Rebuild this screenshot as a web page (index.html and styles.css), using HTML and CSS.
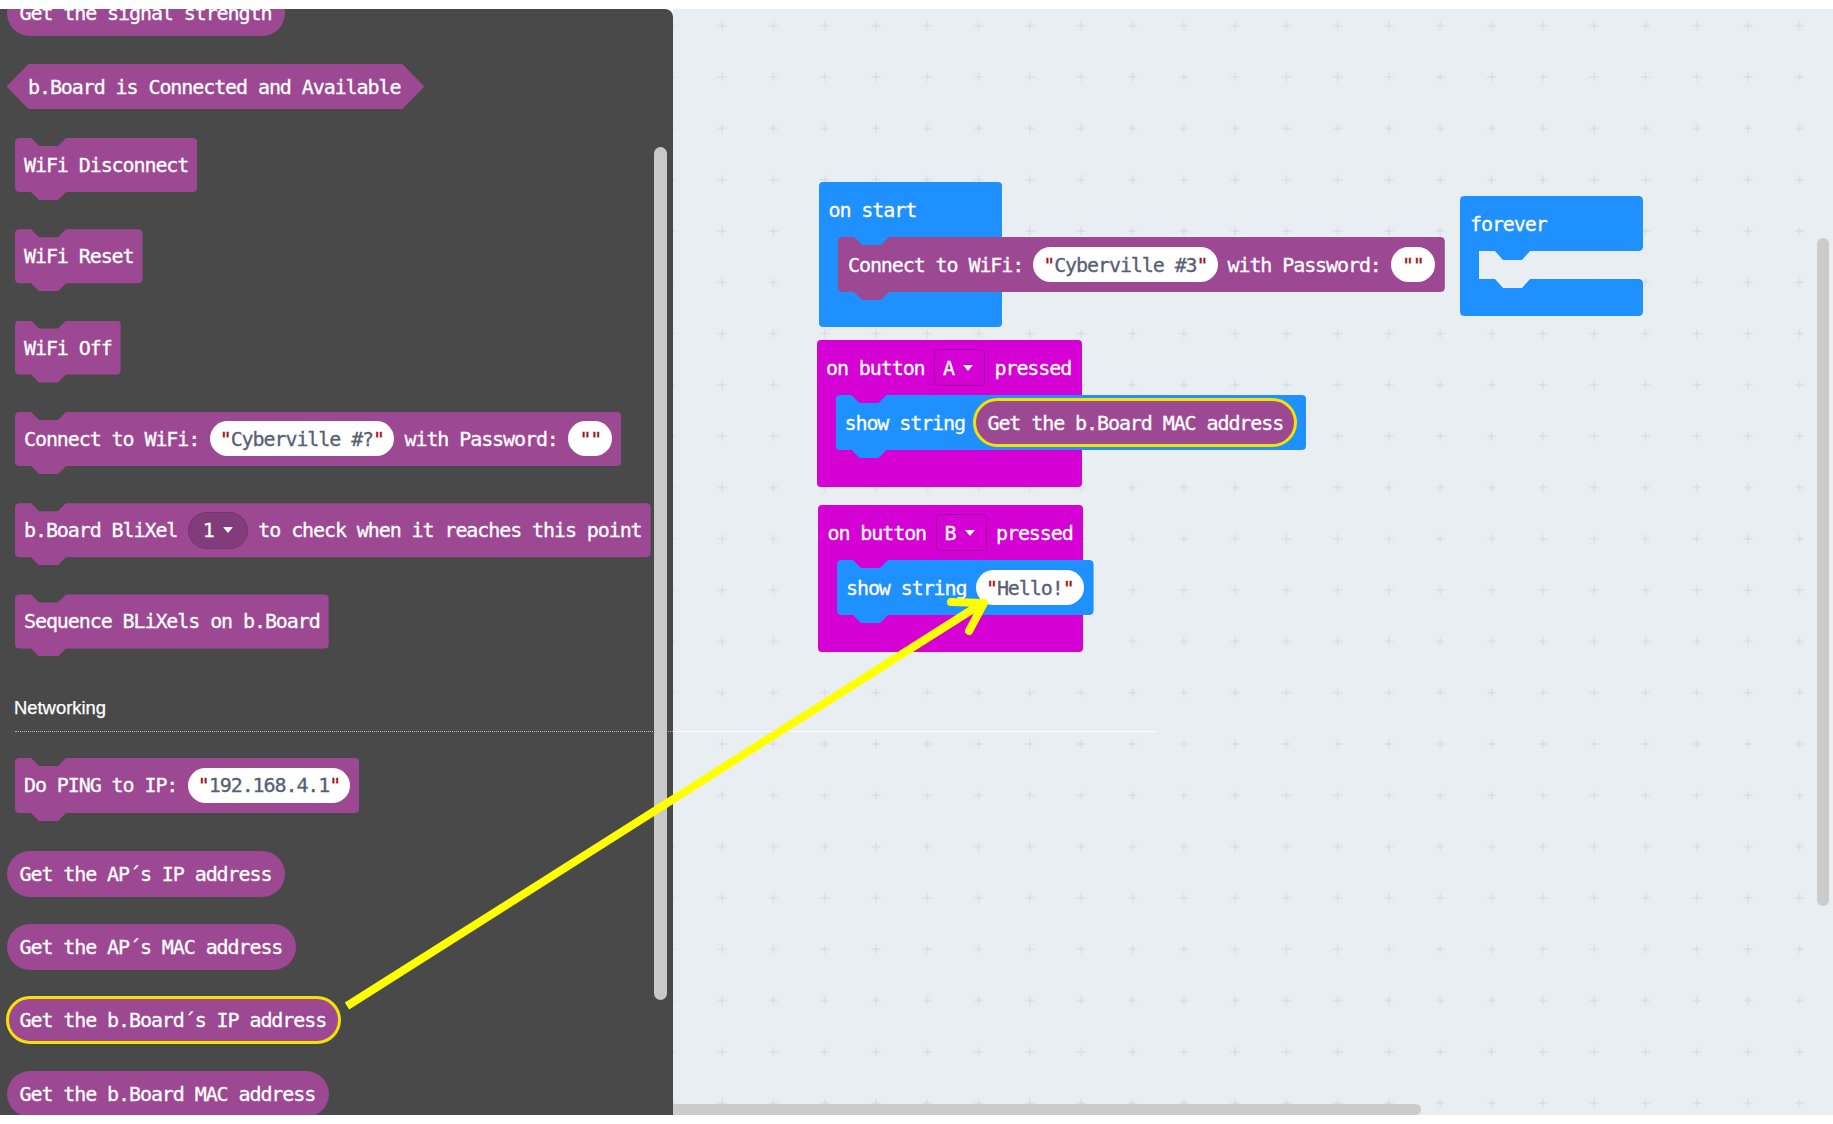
FILE: index.html
```html
<!DOCTYPE html>
<html lang="en">
<head>
<meta charset="utf-8">
<title>Blocks</title>
<link rel="stylesheet" href="styles.css">
</head>
<body>
<div class="workspace">
  <aside class="flyout">
    <div class="fly-list">
      <div class="blk reporter fl-signal">Get the signal strength</div>
      <div class="blk boolean fl-hex">b.Board is Connected and Available</div>
      <div class="blk stmt fl fl-first">WiFi Disconnect</div>
      <div class="blk stmt fl fl-next">WiFi Reset</div>
      <div class="blk stmt fl fl-next">WiFi Off</div>
      <div class="blk stmt fl fl-next">Connect to WiFi:<span class="str"><span class="q">"</span>Cyberville #?<span class="q">"</span></span>with Password:<span class="str"><span class="q">"</span><span class="q">"</span></span></div>
      <div class="blk stmt fl fl-next">b.Board BliXel<span class="dd">1<span class="caret"></span></span>to check when it reaches this point</div>
      <div class="blk stmt fl fl-next">Sequence BLiXels on b.Board</div>
      <div class="cat-label">Networking</div>
      <div class="cat-sep"></div>
      <div class="blk stmt fl fl-ping">Do PING to IP:<span class="str"><span class="q">"</span>192.168.4.1<span class="q">"</span></span></div>
      <div class="blk reporter fl-r1">Get the AP´s IP address</div>
      <div class="blk reporter fl-r2">Get the AP´s MAC address</div>
      <div class="blk reporter fl-r2 selected">Get the b.Board´s IP address</div>
      <div class="blk reporter fl-r3">Get the b.Board MAC address</div>
    </div>
    <div class="fly-scroll"></div>
  </aside>

  <main class="canvas">
    <svg class="grid" width="1160" height="1106" aria-hidden="true">
      <defs>
        <pattern id="gridp" x="23.45" y="-8.85" width="51.3" height="51.3" patternUnits="userSpaceOnUse">
          <path d="M21.15 25.65H30.15M25.65 21.15V30.15" stroke="#d2d8de" stroke-width="1" fill="none"/>
        </pattern>
      </defs>
      <rect width="1160" height="1106" fill="url(#gridp)"/>
    </svg>
    <div class="faint-line"></div>

    <div class="hat blue-c on-start">
      <div class="blk hat-head">on start</div>
      <div class="hat-body">
        <div class="blk stmt in-c">Connect to WiFi:<span class="str"><span class="q">"</span>Cyberville #3<span class="q">"</span></span>with Password:<span class="str"><span class="q">"</span><span class="q">"</span></span></div>
      </div>
      <div class="hat-foot foot-35"></div>
    </div>

    <div class="forever">
      <div class="blk fv-head">forever</div>
      <div class="fv-arm"></div>
      <div class="fv-foot"></div>
    </div>

    <div class="hat magenta-c btn-a">
      <div class="blk hat-head">on button<span class="dd-sq">A<span class="caret"></span></span>pressed</div>
      <div class="hat-body">
        <div class="blk stmt in-c blue">show string<span class="blk reporter in-slot selected">Get the b.Board MAC address</span></div>
      </div>
      <div class="hat-foot foot-37"></div>
    </div>

    <div class="hat magenta-c btn-b">
      <div class="blk hat-head">on button<span class="dd-sq">B<span class="caret"></span></span>pressed</div>
      <div class="hat-body">
        <div class="blk stmt in-c blue">show string<span class="str"><span class="q">"</span>Hello!<span class="q">"</span></span></div>
      </div>
      <div class="hat-foot foot-37"></div>
    </div>

    <div class="vscroll"></div>
    <div class="hscroll"></div>
  </main>
</div>

<svg class="arrow" width="1833" height="1124" viewBox="0 0 1833 1124" aria-hidden="true">
  <line x1="347" y1="1006" x2="981" y2="604" stroke="#ffff00" stroke-width="8"/>
  <polyline points="951,602 984,603 969,631" fill="none" stroke="#ffff00" stroke-width="8" stroke-linecap="round" stroke-linejoin="round"/>
</svg>
</body>
</html>
```

FILE: styles.css
```css
* { box-sizing: border-box; }

html, body {
  margin: 0;
  padding: 0;
  background: #ffffff;
}

body {
  width: 1833px;
  height: 1124px;
  overflow: hidden;
  position: relative;
  font-family: "DejaVu Sans Mono", "Liberation Mono", monospace;
}

.workspace {
  display: flex;
  margin-top: 9px;
  height: 1106px;
}

/* ---------- flyout ---------- */
.flyout {
  width: 673px;
  flex: none;
  background: #4a494a;
  border-top-right-radius: 8px;
  position: relative;
  overflow: hidden;
}

.fly-list {
  display: flex;
  flex-direction: column;
  align-items: flex-start;
}

.fly-scroll {
  position: absolute;
  left: 654px;
  top: 138px;
  width: 13px;
  height: 853px;
  border-radius: 7px;
  background: #c9c9c9;
}

.cat-label {
  font-family: "Liberation Sans", Arial, sans-serif;
  font-size: 18.4px;
  line-height: 20px;
  height: 20px;
  color: #ffffff;
  -webkit-text-stroke: 0.25px #ffffff;
  margin: 41.5px 0 0 14px;
}

.cat-sep {
  align-self: stretch;
  margin: 13px 0 0 15px;
  border-top: 1px dotted #b9b9b9;
}

/* ---------- generic block text ---------- */
.blk {
  font-family: "DejaVu Sans Mono", "Liberation Mono", monospace;
  font-size: 20px;
  letter-spacing: -1.09px;
  line-height: 1;
  color: #ffffff;
  -webkit-text-stroke: 0.3px currentColor;
  white-space: nowrap;
  display: flex;
  align-items: center;
  flex: none;
}

/* statement block with notch and tab */
.stmt {
  height: 62px;
  padding: 0 9px 8px 9px;
  gap: 10.5px;
  background: #9d4893;
  width: max-content;
  clip-path: polygon(
    0 4px, 1px 1px, 4px 0,
    16px 0, 24px 8px, 43px 8px, 51px 0,
    calc(100% - 4px) 0, calc(100% - 1px) 1px, 100% 4px,
    100% calc(100% - 12px), calc(100% - 1px) calc(100% - 9px), calc(100% - 4px) calc(100% - 8px),
    51px calc(100% - 8px), 43px 100%, 24px 100%, 16px calc(100% - 8px),
    4px calc(100% - 8px), 1px calc(100% - 9px), 0 calc(100% - 12px)
  );
}

.stmt.blue { background: #1e90ff; }

.fl { margin-left: 15px; }
.fl-first { margin-top: 29px; }
.fl-next { margin-top: 29.3px; }
.fl-ping { margin-top: 26px; height: 63px; }

/* reporter (round) */
.reporter {
  height: 46px;
  padding: 0 14px 0 13px;
  border-radius: 23px;
  background: #9d4893;
  width: max-content;
}

.fl-signal { margin: -19px 0 0 6.5px; }
.fl-r1 { margin: 30px 0 0 6.5px; }
.fl-r2 { margin: 27px 0 0 6.5px; }
.fl-r3 { margin: 28px 0 0 6.5px; }

.selected {
  outline: 3px solid #f2e400;
  outline-offset: -2px;
}

/* boolean (hexagon) */
.boolean {
  height: 45px;
  padding: 0 24px 0 21.5px;
  background: #9d4893;
  width: max-content;
  margin: 28px 0 0 6.5px;
  clip-path: polygon(22px 0, calc(100% - 22px) 0, 100% 50%, calc(100% - 22px) 100%, 22px 100%, 0 50%);
}

/* string input */
.str {
  height: 35px;
  min-width: 44px;
  padding: 0 10px;
  border-radius: 17.5px;
  background: #ffffff;
  color: #575e75;
  display: inline-flex;
  align-items: center;
  justify-content: center;
  flex: none;
}

.q { color: #a31515; }

/* dropdowns */
.dd {
  height: 37px;
  padding: 0 14px;
  gap: 9px;
  border-radius: 18.5px;
  background: #833c7b;
  border: 1px solid #74356d;
  display: inline-flex;
  align-items: center;
  flex: none;
}

.dd-sq {
  height: 37px;
  padding: 0 11px 0 8px;
  gap: 9px;
  border-radius: 4px;
  background: #d400d4;
  border: 1px solid #a600a6;
  display: inline-flex;
  align-items: center;
  flex: none;
}

.caret {
  width: 0;
  height: 0;
  border-left: 5px solid transparent;
  border-right: 5px solid transparent;
  border-top: 6px solid #ffffff;
  border-radius: 1px;
}

/* ---------- canvas ---------- */
.canvas {
  flex: 1;
  background: #e9eef2;
  position: relative;
  overflow: hidden;
}

.grid {
  position: absolute;
  left: 0;
  top: 0;
}

.faint-line {
  position: absolute;
  left: 0;
  top: 722px;
  width: 484px;
  height: 1px;
  background: rgba(255, 255, 255, 0.75);
}

.vscroll {
  position: absolute;
  left: 1144px;
  top: 229px;
  width: 12px;
  height: 668px;
  border-radius: 6px;
  background: #cbcbcb;
}

.hscroll {
  position: absolute;
  left: 0;
  top: 1095px;
  width: 748px;
  height: 11px;
  border-radius: 0 6px 6px 0;
  background: #cbcbcb;
}

/* C-shaped event blocks */
.hat {
  position: absolute;
  display: flex;
  flex-direction: column;
  align-items: flex-start;
  border-radius: 4px;
}

.blue-c { background: #1e90ff; }
.magenta-c { background: #d400d4; }

.hat-head {
  align-self: stretch;
  height: 55px;
  padding: 0 9px 0 9.5px;
  gap: 9.5px;
}

.hat-body {
  align-self: stretch;
  padding-left: 19px;
}

.hat-foot { align-self: stretch; }
.foot-35 { height: 35px; }
.foot-37 { height: 37px; }

.stmt.in-c {
  height: 63px;
  margin-bottom: -8px;
  padding: 0 10px 8px 9px;
  gap: 9.5px;
}

.on-start { left: 146px; top: 173px; width: 183px; }
.on-start .stmt.in-c { gap: 10px; padding-left: 10px; }
.btn-a { left: 143.5px; top: 331px; width: 265px; }
.btn-b { left: 145px; top: 496px; width: 265px; }

.reporter.in-slot {
  height: 47px;
  padding: 0 13px;
  border-radius: 23.5px;
}

/* forever block */
.forever {
  position: absolute;
  left: 787px;
  top: 187px;
  width: 183px;
  display: flex;
  flex-direction: column;
  align-items: flex-start;
}

.fv-head {
  align-self: stretch;
  height: 64px;
  padding: 0 10px 9px 10px;
  margin-bottom: -9px;
  background: #1e90ff;
  clip-path: polygon(
    0 4px, 1px 1px, 4px 0,
    calc(100% - 4px) 0, calc(100% - 1px) 1px, 100% 4px,
    100% calc(100% - 13px), calc(100% - 1px) calc(100% - 10px), calc(100% - 4px) calc(100% - 9px),
    70px calc(100% - 9px), 62px 100%, 43px 100%, 35px calc(100% - 9px),
    0 calc(100% - 9px)
  );
}

.fv-arm {
  width: 19px;
  height: 28px;
  background: #1e90ff;
}

.fv-foot {
  align-self: stretch;
  height: 37px;
  background: #1e90ff;
  clip-path: polygon(
    0 0, 35px 0, 43px 9px, 62px 9px, 70px 0,
    calc(100% - 4px) 0, calc(100% - 1px) 1px, 100% 4px,
    100% calc(100% - 4px), calc(100% - 1px) calc(100% - 1px), calc(100% - 4px) 100%,
    4px 100%, 1px calc(100% - 1px), 0 calc(100% - 4px)
  );
}

/* annotation arrow */
.arrow {
  position: absolute;
  left: 0;
  top: 0;
  pointer-events: none;
  z-index: 10;
}
```
